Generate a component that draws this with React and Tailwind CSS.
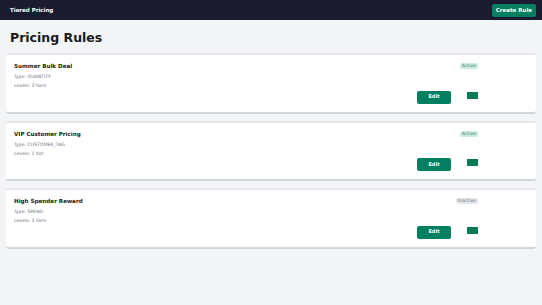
import React from 'react';

const rules = [
  { name: 'Summer Bulk Deal', type: 'QUANTITY', levels: '3 tiers', active: true },
  { name: 'VIP Customer Pricing', type: 'CUSTOMER_TAG', levels: '1 tier', active: true },
  { name: 'High Spender Reward', type: 'SPEND', levels: '2 tiers', active: false },
];

function RuleCard({ rule }) {
  return (
    <div className="h-[60.5px] bg-white rounded-[3px] border-t-2 border-b-2 border-t-gray-200 border-b-gray-300 flex justify-between px-2 pt-[6px] pb-[8px]">
      <div className="flex flex-col">
        <div className="text-[5.6px] leading-[10px] font-bold text-[#1a1a1a]">{rule.name}</div>
        <div className="mt-[1px] text-[4.6px] leading-[9px] text-gray-500">Type: {rule.type}</div>
        <div className="text-[4.6px] leading-[9px] text-gray-500">Levels: {rule.levels}</div>
      </div>
      <div className="flex flex-col items-end justify-between mr-[50px] pt-[2px]">
        {rule.active ? (
          <span className="px-[2px] text-[4.6px] leading-[6px] rounded-[2px] bg-[#c9eedf] text-[#3f8a6e]">Active</span>
        ) : (
          <span className="px-[2px] text-[4.6px] leading-[6px] rounded-[2px] bg-gray-200 text-gray-500">Inactive</span>
        )}
        <div className="flex items-start gap-[16px]">
          <button className="w-[34px] h-[13px] rounded-[2px] bg-[#008060] text-white text-[5px] font-bold">Edit</button>
          <div className="mt-[1px] w-[11px] h-[7px] bg-[#0b7a57]" />
        </div>
      </div>
    </div>
  );
}

export default function App() {
  return (
    <div className="min-h-[305px] bg-[#f3f4f6]" style={{ fontFamily: '"DejaVu Sans", sans-serif' }}>
      {/* Top bar */}
      <div className="h-[20px] bg-[#1b1a2e] flex items-center justify-between pl-[10px] pr-[6px]">
        <span className="text-white text-[5.5px] font-bold">Tiered Pricing</span>
        <button className="h-[13px] px-[4px] rounded-[2px] bg-[#008060] text-white text-[5.5px] font-bold">Create Rule</button>
      </div>

      <div className="px-[6px]">
        <h1 className="pl-[4px] pt-[9px] pb-[6px] text-[12.5px] leading-[18px] font-bold text-[#1a1a1a]">Pricing Rules</h1>
        <div className="flex flex-col gap-[7px]">
          {rules.map(r => <RuleCard key={r.name} rule={r} />)}
        </div>
      </div>
    </div>
  );
}
